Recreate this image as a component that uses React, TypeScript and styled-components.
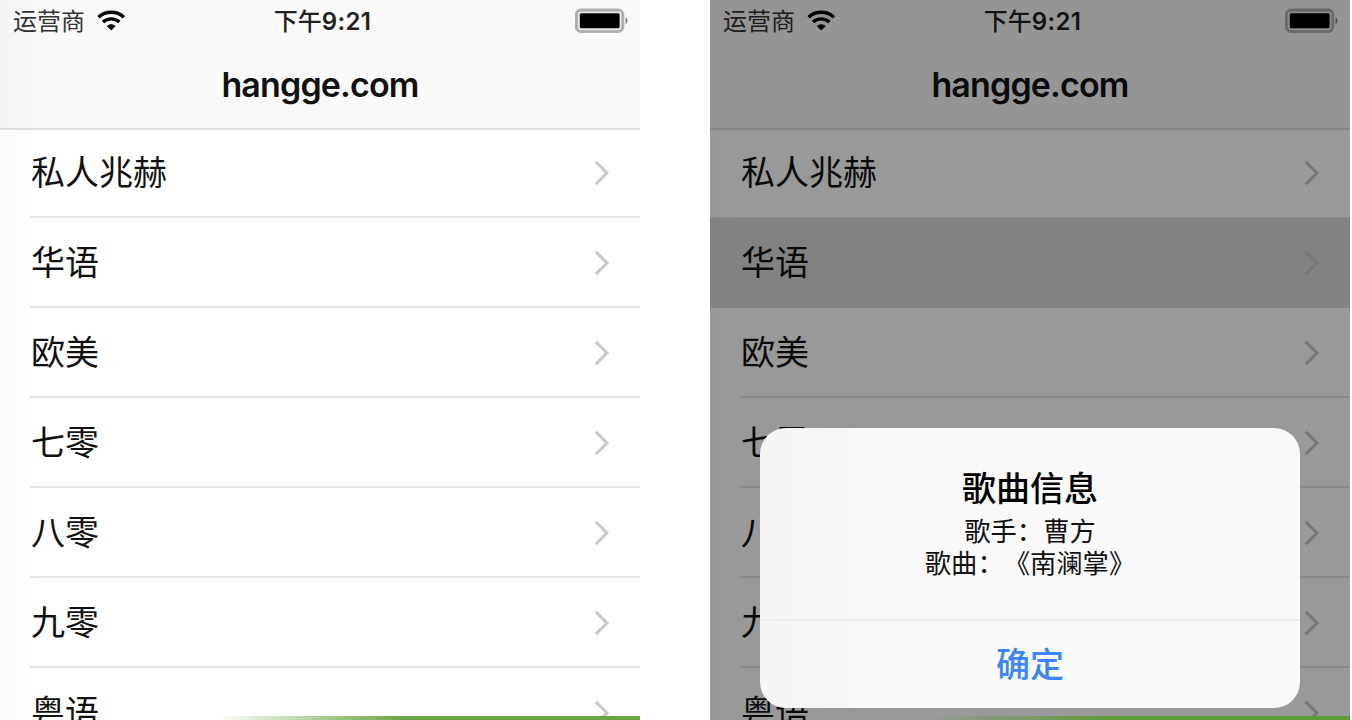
import React from "react";
import styled, { createGlobalStyle } from "styled-components";

const GlobalStyle = createGlobalStyle`
  body {
    margin: 0;
    background: #fff;
    overflow: hidden;
  }
  * { box-sizing: border-box; }
`;

const Page = styled.main`
  display: flex;
  gap: 70px;
  width: 1352px;
  height: 720px;
  overflow: hidden;
  font-family: Inter, "Noto Sans CJK SC", sans-serif;
  color: #111;
`;

const Phone = styled.section`
  position: relative;
  flex: 0 0 640px;
  height: 720px;
  overflow: hidden;
  background: linear-gradient(90deg, #fbfbfb, #fff 36px);
`;

const Header = styled.header`
  height: 130px;
  border-bottom: 2px solid #dcdcdc;
  background: linear-gradient(90deg, #f5f5f5, #f9f9f9 40px);
`;

const StatusBar = styled.div`
  display: grid;
  grid-template-columns: 1fr auto 1fr;
  align-items: center;
  height: 42px;
  padding: 0 11px 0 13px;
`;

const Carrier = styled.div`
  display: flex;
  align-items: center;
  gap: 12px;
  padding-top: 1px;
  font-size: 24px;
  line-height: 41px;
  color: #333;
  svg { margin-top: -3px; }
`;

const Time = styled.div`
  padding: 1px 0 0 3px;
  font-size: 24px;
  line-height: 41px;
  font-weight: 500;
  color: #222;
  b { font-weight: 600; letter-spacing: 0.4px; }
`;

const BatteryBox = styled.div`
  display: flex;
  justify-content: flex-end;
`;

const Title = styled.h1`
  margin: 0;
  text-align: center;
  font-size: 34px;
  font-weight: 600;
  line-height: 86px;
  letter-spacing: -0.85px;
`;

const List = styled.ul`
  margin: -2px 0 0;
  padding: 0;
  list-style: none;
`;

const RowBody = styled.div`
  flex: 1;
  display: flex;
  align-items: center;
  justify-content: space-between;
  padding: 2px 30px 0 1px;
  border-bottom: 2px solid #e4e4e6;
  font-size: 34px;
  line-height: 86px;
  svg { margin-top: -1px; }
`;

const Row = styled.li<{ $selected?: boolean }>`
  display: flex;
  height: 90px;
  padding-left: 30px;
  background: ${(p) => (p.$selected ? "#d9d9d9" : "none")};
  box-shadow: ${(p) => (p.$selected ? "0 -1px 0 #e6e6e6" : "none")};
  ${RowBody} {
    border-color: ${(p) => (p.$selected ? "#d9d9d9" : "#e4e4e6")};
  }
  &:has(+ [data-selected="true"]) ${RowBody} {
    border-color: transparent;
  }
`;

const Dim = styled.div`
  position: absolute;
  inset: 0;
  background: rgba(0, 0, 0, 0.4);
`;

const Alert = styled.div`
  position: absolute;
  left: 50px;
  top: 428px;
  width: 540px;
  height: 280px;
  display: flex;
  flex-direction: column;
  border-radius: 26px;
  background: linear-gradient(90deg, #f4f4f4, #f9f9f9 100px);
  text-align: center;
`;

const AlertBody = styled.div`
  flex: none;
  height: 193px;
  padding-top: 39px;
  border-bottom: 2px solid #ececec;
`;

const AlertTitle = styled.h2`
  margin: 0;
  font-size: 34px;
  font-weight: 500;
  line-height: 44px;
  color: #000;
`;

const AlertMessage = styled.p`
  margin: 5px 0 0;
  font-size: 26.3px;
  line-height: 32px;
  text-spacing-trim: space-all;
  span { display: block; }
`;

const AlertButton = styled.button`
  flex: none;
  height: 87px;
  border: 0;
  background: none;
  font: 500 34px/87px Inter, "Noto Sans CJK SC", sans-serif;
  color: #3b85fb;
  padding: 0;
`;

const Banner = styled.div<{ $dark?: boolean }>`
  position: absolute;
  left: 216px;
  right: 0;
  bottom: 0;
  height: 4px;
  background: ${(p) =>
    p.$dark
      ? "linear-gradient(90deg, rgba(94,154,55,0), #5e9a37 190px)"
      : "linear-gradient(90deg, rgba(106,164,66,0), #6aa442 190px)"};
`;

const Wifi = () => (
  <svg width="29" height="21" viewBox="0 0 29 21" fill="none" stroke="#000" strokeWidth="3.4">
    <path d="M1.5 7.2a18.8 18.8 0 0 1 25.4 0" />
    <path d="M6 12.1a12.1 12.1 0 0 1 16.4 0" />
    <path d="M10.2 16.2a6.4 6.4 0 0 1 8 0L14.2 20Z" fill="#000" stroke="#000" strokeWidth="0.8" strokeLinejoin="round" />
  </svg>
);

const Battery = () => (
  <svg width="54" height="26" viewBox="0 0 54 26">
    <rect x="1.3" y="2" width="46.6" height="21.6" rx="4.5" fill="#000" fillOpacity=".06" stroke="#000" strokeOpacity=".28" strokeWidth="2.8" />
    <rect x="4.8" y="5.3" width="39.8" height="15" rx="1.5" fill="#000" />
    <path d="M50.6 9.4c2.4 1 2.4 5.6 0 6.6Z" fill="#000" fillOpacity=".5" />
  </svg>
);

const Chevron = () => (
  <svg width="16" height="26" viewBox="0 0 16 26" fill="none" stroke="#c7c7cc" strokeWidth="3">
    <path d="M1.7 1.7 13 13 1.7 24.3" />
  </svg>
);

const genres = ["私人兆赫", "华语", "欧美", "七零", "八零", "九零", "粤语"];

const Screen = ({ selected, children }: { selected?: string; children?: React.ReactNode }) => (
  <Phone>
    <Header>
      <StatusBar>
        <Carrier>运营商 <Wifi /></Carrier>
        <Time>下午<b>9:21</b></Time>
        <BatteryBox><Battery /></BatteryBox>
      </StatusBar>
      <Title>hangge.com</Title>
    </Header>
    <List>
      {genres.map((name) => (
        <Row key={name} $selected={name === selected} data-selected={name === selected}>
          <RowBody>
            {name}
            <Chevron />
          </RowBody>
        </Row>
      ))}
    </List>
    {children}
  </Phone>
);

export default function App() {
  return (
    <>
      <GlobalStyle />
      <Page>
        <Screen><Banner /></Screen>
        <Screen selected="华语">
          <Dim />
          <Banner $dark />
          <Alert>
            <AlertBody>
              <AlertTitle>歌曲信息</AlertTitle>
              <AlertMessage>
                <span>歌手：曹方</span>
                <span>歌曲：《南澜掌》</span>
              </AlertMessage>
            </AlertBody>
            <AlertButton>确定</AlertButton>
          </Alert>
        </Screen>
      </Page>
    </>
  );
}
